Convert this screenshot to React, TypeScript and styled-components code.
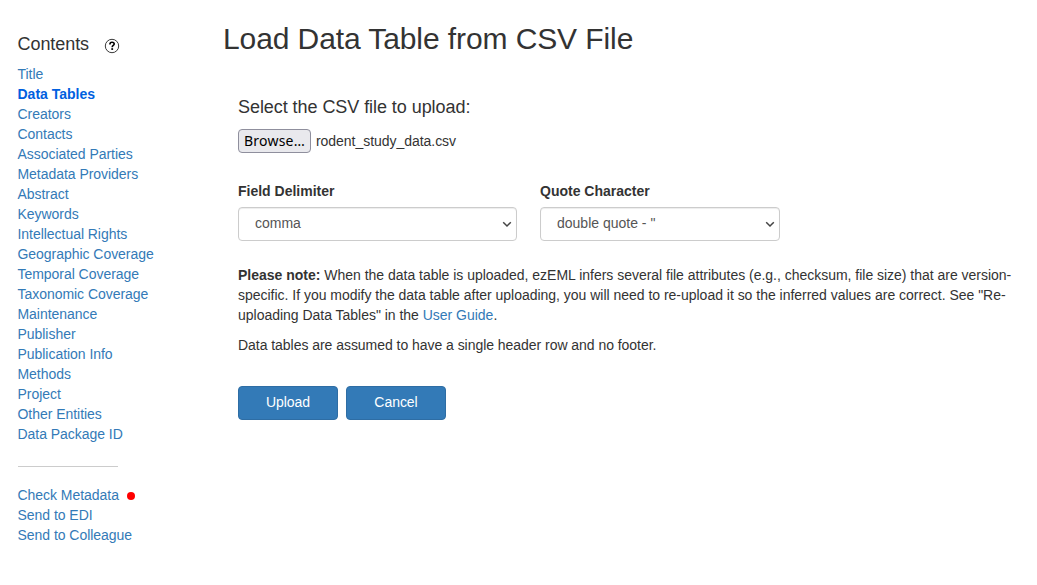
import React from 'react';
import styled, { createGlobalStyle } from 'styled-components';

const GlobalStyle = createGlobalStyle`
  *, *::before, *::after { box-sizing: border-box; }
  body {
    margin: 0;
    background: #fff;
    color: #333;
    font: 14px/20px "Liberation Sans", Arial, sans-serif;
    letter-spacing: -0.04px;
  }
`;

const Page = styled.div`
  display: flex;
  height: 585px;
  overflow: hidden;
`;

const Sidebar = styled.nav`
  flex: 0 0 223px;
  padding: 34px 0 0 17.5px;
`;

const SidebarHeader = styled.div`
  display: flex;
  gap: 14.5px;
  height: 30px;
`;

const SidebarTitle = styled.h4`
  margin: 0;
  font-size: 18px;
  font-weight: 400;
  line-height: 20px;
  letter-spacing: -0.06px;
`;

const HelpIcon = styled.svg`
  display: block;
  width: 16px;
  height: 16px;
  margin-top: 4px;
`;

const NavList = styled.ul`
  margin: 0;
  padding: 0;
  list-style: none;
`;

const NavItem = styled.li`
  display: flex;
  align-items: center;
  height: 20px;
`;

const Link = styled.a<{ $active?: boolean }>`
  color: ${({ $active }) => ($active ? '#0060df' : '#337ab7')};
  font-weight: ${({ $active }) => ($active ? 700 : 400)};
  letter-spacing: ${({ $active }) => ($active ? '0' : 'inherit')};
  text-decoration: none;
`;

const Divider = styled.hr`
  width: 100px;
  height: 1px;
  margin: 22px 0 18px;
  border: 0;
  background: #ccc;
`;

const StatusDot = styled.span`
  width: 8px;
  height: 8px;
  margin: 2px 0 0 8.5px;
  border-radius: 50%;
  background: #f00;
`;

const Main = styled.main`
  flex: 1;
  padding-top: 22px;
`;

const PageTitle = styled.h2`
  margin: 0;
  font-size: 30px;
  font-weight: 400;
  line-height: 33px;
  letter-spacing: -0.095px;
`;

const Form = styled.form`
  width: 790px;
  padding: 42px 0 0 15px;
`;

const UploadLabel = styled.label`
  display: block;
  font-size: 18px;
  line-height: 20px;
  letter-spacing: -0.06px;
`;

const FilePicker = styled.div`
  display: flex;
  align-items: center;
  gap: 5px;
  height: 24px;
  margin-top: 12px;
`;

const BrowseButton = styled.button`
  width: 73px;
  height: 24px;
  padding: 0;
  border: 1px solid #8f8f9d;
  border-radius: 4px;
  background: #e9e9ed;
  color: #000;
  font: 14px/20px "Noto Sans", sans-serif;
  letter-spacing: 0.2px;
`;

const FieldRow = styled.div`
  display: flex;
  gap: 23px;
  margin-top: 28px;
`;

const Field = styled.div<{ $width: number }>`
  width: ${({ $width }) => $width}px;
`;

const FieldLabel = styled.label`
  display: block;
  height: 26px;
  font-weight: 700;
  letter-spacing: 0;
`;

const SelectBox = styled.div`
  display: flex;
  align-items: center;
  justify-content: space-between;
  height: 34px;
  padding: 0 4px 0 16px;
  border: 1px solid #ccc;
  border-radius: 4px;
  box-shadow: inset 0 1px 1px rgba(0, 0, 0, 0.075);
  color: #555;
  line-height: 20px;
  letter-spacing: 0;
`;

const SelectValue = styled.span`
  padding-bottom: 2px;
`;

const Note = styled.p`
  margin: 24px 0 0;
  letter-spacing: -0.018px;
`;

const Strong = styled.b`
  letter-spacing: 0;
`;

const HeaderNote = styled.p`
  margin: 10px 0 0;
`;

const Actions = styled.div`
  display: flex;
  gap: 8px;
  margin-top: 31px;
`;

const ActionButton = styled.button`
  width: 100px;
  height: 34px;
  padding: 0 0 2px;
  border: 1px solid #2e6da4;
  border-radius: 4px;
  background: #337ab7;
  color: #fff;
  font: inherit;
  letter-spacing: -0.04px;
`;

const contents = [
  'Title',
  'Data Tables',
  'Creators',
  'Contacts',
  'Associated Parties',
  'Metadata Providers',
  'Abstract',
  'Keywords',
  'Intellectual Rights',
  'Geographic Coverage',
  'Temporal Coverage',
  'Taxonomic Coverage',
  'Maintenance',
  'Publisher',
  'Publication Info',
  'Methods',
  'Project',
  'Other Entities',
  'Data Package ID',
];

function Chevron() {
  return (
    <svg width="10" height="8" viewBox="0 0 10 8" fill="none">
      <path d="M1.2 2.2L5 6L8.8 2.2" stroke="#444" strokeWidth="1.5" />
    </svg>
  );
}

function Select({ label, value, width }: { label: string; value: string; width: number }) {
  return (
    <Field $width={width}>
      <FieldLabel>{label}</FieldLabel>
      <SelectBox role="combobox" aria-label={label}>
        <SelectValue>{value}</SelectValue>
        <Chevron />
      </SelectBox>
    </Field>
  );
}

export default function App() {
  return (
    <>
      <GlobalStyle />
      <Page>
        <Sidebar>
          <SidebarHeader>
            <SidebarTitle>Contents</SidebarTitle>
            <HelpIcon viewBox="0 0 16 16" fill="none">
              <circle cx="8" cy="8" r="6.7" stroke="#222" strokeWidth="0.9" />
              <path
                d="M5.9 6.4C5.9 4.9 6.8 4.3 8 4.3C9.3 4.3 10.2 5 10.2 6.1C10.2 7.5 8.2 7.5 8.2 9.2"
                stroke="#000"
                strokeWidth="1.6"
              />
              <rect x="7.3" y="10.2" width="1.8" height="1.7" fill="#000" />
            </HelpIcon>
          </SidebarHeader>
          <NavList>
            {contents.map((item) => (
              <NavItem key={item}>
                <Link $active={item === 'Data Tables'}>{item}</Link>
              </NavItem>
            ))}
          </NavList>
          <Divider />
          <NavList>
            <NavItem>
              <Link>Check Metadata</Link>
              <StatusDot />
            </NavItem>
            <NavItem>
              <Link>Send to EDI</Link>
            </NavItem>
            <NavItem>
              <Link>Send to Colleague</Link>
            </NavItem>
          </NavList>
        </Sidebar>
        <Main>
          <PageTitle>Load Data Table from CSV File</PageTitle>
          <Form>
            <UploadLabel>Select the CSV file to upload:</UploadLabel>
            <FilePicker>
              <BrowseButton type="button">Browse…</BrowseButton>
              <span>rodent_study_data.csv</span>
            </FilePicker>
            <FieldRow>
              <Select label="Field Delimiter" value="comma" width={279} />
              <Select label="Quote Character" value={'double quote - "'} width={240} />
            </FieldRow>
            <Note>
              <Strong>Please note:</Strong> When the data table is uploaded, ezEML infers several file
              attributes (e.g., checksum, file size) that are version-specific. If you modify the data table
              after uploading, you will need to re-upload it so the inferred values are correct. See
              "Re-uploading Data Tables" in the <Link>User Guide</Link>.
            </Note>
            <HeaderNote>Data tables are assumed to have a single header row and no footer.</HeaderNote>
            <Actions>
              <ActionButton type="button">Upload</ActionButton>
              <ActionButton type="button">Cancel</ActionButton>
            </Actions>
          </Form>
        </Main>
      </Page>
    </>
  );
}
